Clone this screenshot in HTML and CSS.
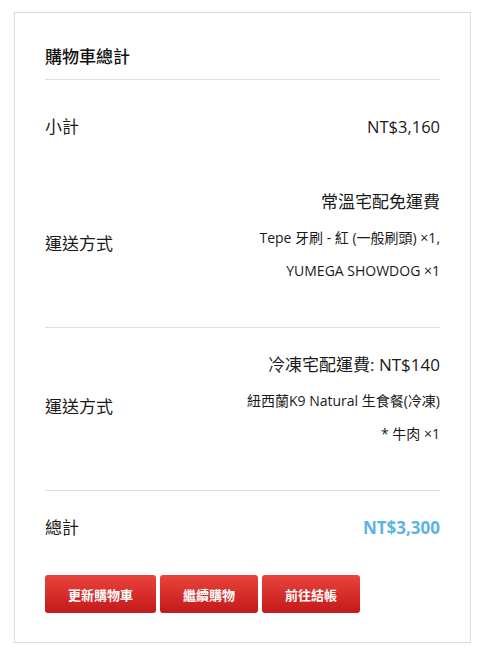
FILE: index.html
```html
<!DOCTYPE html>
<html lang="zh-Hant">
<head>
<meta charset="utf-8">
<link rel="stylesheet" href="styles.css">
</head>
<body>
<div class="cart-totals">
  <h2 class="title">購物車總計</h2>
  <div class="row subtotal">
    <div class="label">小計</div>
    <div class="value">NT$3,160</div>
  </div>
  <div class="row shipping first">
    <div class="label ship-label">運送方式</div>
    <div class="ship-info">
      <div class="ship-name">常溫宅配免運費</div>
      <div class="ship-item">Tepe 牙刷 - 紅 (一般刷頭) ×1,</div>
      <div class="ship-item">YUMEGA SHOWDOG ×1</div>
    </div>
  </div>
  <div class="row shipping second">
    <div class="label ship-label">運送方式</div>
    <div class="ship-info">
      <div class="ship-name">冷凍宅配運費: NT$140</div>
      <div class="ship-item">紐西蘭K9 Natural 生食餐(冷凍)</div>
      <div class="ship-item">* 牛肉 ×1</div>
    </div>
  </div>
  <div class="row total">
    <div class="label">總計</div>
    <div class="value total-value">NT$3,300</div>
  </div>
  <div class="actions">
    <button class="btn btn-wide">更新購物車</button>
    <button class="btn">繼續購物</button>
    <button class="btn">前往結帳</button>
  </div>
</div>
</body>
</html>
```

FILE: styles.css
```css
html, body {
  margin: 0;
  padding: 0;
  background: #fff;
}
body {
  font-family: "Open Sans", "Noto Sans CJK TC", sans-serif;
  color: #222;
  padding: 12px 0 0 14px;
}
.cart-totals {
  box-sizing: border-box;
  width: 457px;
  border: 1px solid #dcdcdc;
  padding: 32px 30px 29px 30px;
}
.title {
  margin: 0;
  font-size: 17px;
  line-height: 24px;
  font-weight: 500;
  color: #111;
  padding-bottom: 10px;
  border-bottom: 1px solid #dedede;
}
.row {
  display: flex;
  justify-content: space-between;
  align-items: center;
}
.label {
  font-size: 17px;
  line-height: 24px;
  color: #1a1a1a;
}
.value {
  font-size: 16.5px;
  line-height: 24px;
  color: #1a1a1a;
}
.subtotal {
  padding: 35px 0 25px;
}
.shipping {
  padding: 17px 0 40px;
  border-bottom: 1px solid #dedede;
}
.shipping.first {
  padding-top: 18px;
}
.ship-label {
  padding-top: 19px;
}
.ship-info {
  text-align: right;
  color: #1a1a1a;
}
.ship-name {
  font-size: 17px;
  line-height: 39px;
}
.ship-item {
  font-size: 14px;
  line-height: 33px;
}
.total {
  padding: 25px 0 35px;
}
.total-value {
  color: #5cb4e3;
  font-weight: 700;
  font-size: 17px;
}
.actions {
  display: flex;
  gap: 4px;
}
.btn {
  font-family: "Open Sans", "Noto Sans CJK TC", sans-serif;
  height: 38px;
  width: 98px;
  border: 0;
  border-radius: 3px;
  background: linear-gradient(#ea433b, #c3191b);
  color: #fff;
  font-size: 13px;
  font-weight: 700;
  padding: 0;
}
.btn-wide {
  width: 111px;
}
```
